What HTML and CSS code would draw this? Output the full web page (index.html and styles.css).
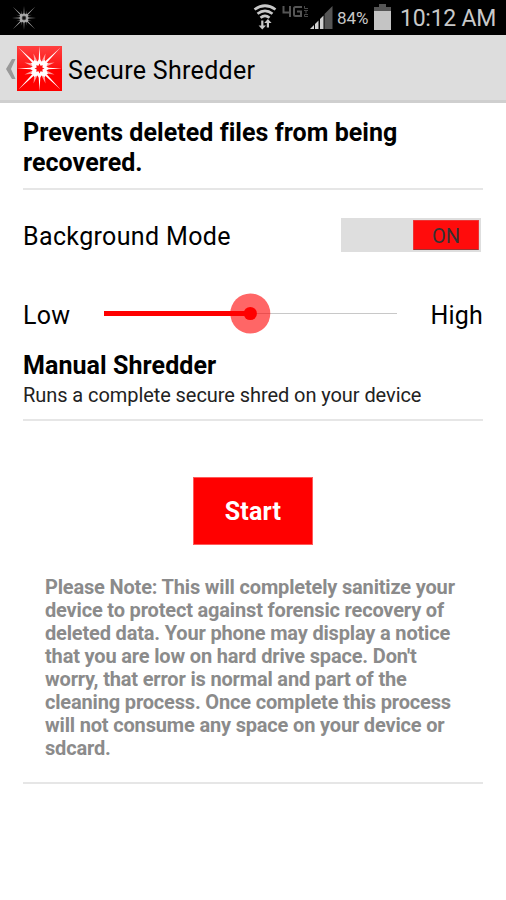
FILE: index.html
```html
<!DOCTYPE html>
<html lang="en">
<head>
<meta charset="utf-8">
<title>Secure Shredder</title>
<link rel="stylesheet" href="styles.css">
</head>
<body>
<svg class="defs" width="0" height="0" aria-hidden="true">
  <symbol id="burst" viewBox="-22.5 -22.5 45 45">
    <path d="M0-22.500 .8-9 0 0-.8-9zM0 22.500 .8 9 0 0-.8 9zM-22.500 0-9-.8 0 0-9 .8zM22.500 0 9-.8 0 0 9 .8z"/>
    <path d="M-21-21-5.500-7 0 0-7-5.500zM21-21 5.500-7 0 0 7-5.500zM-21 21-5.500 7 0 0-7 5.500zM21 21 5.500 7 0 0 7 5.500z"/>
    <path class="haze" d="M-6-15-2-7-5-5zM6-15 2-7 5-5zM-6 15-2 7-5 5zM6 15 2 7 5 5zM-15-6-7-2-5-5zM-15 6-7 2-5 5zM15-6 7-2 5-5zM15 6 7 2 5 5z"/>
    <path d="M0-10 2-7 5.500-8.500 6-6 8.500-5.500 7-2 10 0 7 2 8.500 5.500 6 6 5.500 8.500 2 7 0 10-2 7-5.500 8.500-6 6-8.500 5.500-7 2-10 0-7-2-8.500-5.500-6-6-5.500-8.500-2-7z"/>
    <path class="core" d="M0-5 1-2.800 3.300-3.300 2.800-1 5 0 2.800 1 3.300 3.300 1 2.800 0 5-1 2.800-3.300 3.300-2.800 1-5 0-2.800-1-3.300-3.300-1-2.800z"/>
  </symbol>
</svg>
<div class="status">
  <svg class="status-burst" width="24" height="24"><use href="#burst"/></svg>
  <svg class="wifi" width="24" height="27" viewBox="0 0 24 27">
    <g fill="none" stroke="#c8c8c8" stroke-width="2.700">
      <path d="M1.500 5.500Q12-2 22.500 5.500M4.500 9.800Q12 4 19.500 9.800M7.500 13.800Q12 10 16.500 13.800"/>
    </g>
    <path fill="#c8c8c8" d="M8.200 16.500h2.200v5H13L9.300 25.500 5.600 21.500h2.600zM13.800 23.500H16v-4.500h2.600L14.900 15l-3.700 4h2.600z"/>
  </svg>
  <svg class="lte" width="27" height="12" viewBox="0 0 27 12">
    <path fill="none" stroke="#555" stroke-width="2" d="M1.500 0v6.500H9M8 0v11M20 1h-6.500q-1.500 0-1.500 1.500V8.500q0 1.500 1.500 1.500H19V5.500h-4"/>
    <path fill="none" stroke="#484848" stroke-width="1" d="M22.500 0v2.500H26M22 4.500h4M24 4.500v3M26 8.500h-3.500v2H26"/>
  </svg>
  <svg class="signal" width="23" height="23" viewBox="0 0 23 23">
    <path fill="#555" d="M14.500 8 22.500 0v23h-8z"/>
    <path fill="#d0d0d0" d="M0 23l4-4v4zM5 18l3.500-3.500V23H5zM10 13l3.500-3.500V23H10z"/>
  </svg>
  <span class="percent">84%</span>
  <svg class="battery" width="17" height="26" viewBox="0 0 17 26">
    <path fill="#555" d="M5 0h7v3h5v4H0V3h5z"/><path fill="#c4c4c4" d="M0 7h17v19H0z"/>
  </svg>
  <span class="clock">10:12 AM</span>
</div>
<header class="bar">
  <svg class="back" width="10" height="20" viewBox="0 0 10 20"><path fill="#999" d="M6 0h3.500L5 10l4.500 10H6L0 10z"/></svg>
  <svg class="logo" width="45" height="45"><use href="#burst"/></svg>
  <h1>Secure Shredder</h1>
</header>
<main>
  <h2 class="lead">Prevents deleted files from being<br>recovered.</h2>
  <div class="mode">
    <span class="mode-label">Background Mode</span>
    <div class="switch"><div class="thumb">ON</div></div>
  </div>
  <div class="level">
    <span class="low">Low</span>
    <svg class="slider" width="294" height="42" viewBox="0 0 294 42">
      <path fill="#c8c8c8" d="M146 20h147v1H146z"/>
      <path fill="red" d="M0 18h146v5H0z"/>
      <circle cx="146.300" cy="20.500" r="20" fill="red" fill-opacity=".6"/>
      <circle cx="146.300" cy="20.500" r="6.600" fill="red"/>
    </svg>
    <span class="high">High</span>
  </div>
  <section class="manual">
    <h2>Manual Shredder</h2>
    <p>Runs a complete secure shred on your device</p>
  </section>
  <section class="action">
    <button class="start">Start</button>
    <p class="note">Please Note: This will completely sanitize your<br>device to protect against forensic recovery of<br>deleted data. Your phone may display a notice<br>that you are low on hard drive space. Don't<br>worry, that error is normal and part of the<br>cleaning process. Once complete this process<br>will not consume any space on your device or<br>sdcard.</p>
  </section>
</main>
</body>
</html>
```
FILE: styles.css
```css
* { box-sizing: border-box; }
body { margin: 0; width: 506px; height: 900px; background: #fff; color: #000; font-family: Roboto, sans-serif; white-space: nowrap; overflow: hidden; }
h1, h2, p { margin: 0; }
svg { display: block; flex: none; }
.defs { position: absolute; }
.status { height: 35px; background: #000; display: flex; align-items: flex-start; color: #c8c8c8; }
.status-burst { margin: 6px 0 0 12px; fill: #aaa; --core: #111; }
.status-burst { --haze: .3; }
.wifi { margin: 4px 0 0 217px; }
.lte { margin: 6px 0 0 5px; }
.signal { margin: 6px 0 0 1px; }
.percent { width: 37px; margin: 7px 0 0 4px; font-size: 17px; line-height: 22px; }
.battery { margin: 4px 0 0 0; }
.clock { margin: 5px 0 0 9px; font-size: 23px; line-height: 28px; letter-spacing: -.25px; }
.bar { height: 68px; background: #ddd; border-bottom: 3px solid #cfcfcf; display: flex; align-items: flex-start; }
.back { margin: 24px 0 0 6px; }
.logo { margin: 11px 0 0 1px; background: linear-gradient(#ff4040, #f11 50%, #f00 52%); fill: #fff; --core: #f11; --haze: .6; }
.core { fill: var(--core); }
.haze { opacity: var(--haze); }
h1 { margin: 20px 0 0 6px; font-size: 25px; line-height: 32px; font-weight: 400; letter-spacing: .31px; }
main { padding: 0 23px; }
.lead { height: 87px; padding-top: 15px; border-bottom: 2px solid #e6e6e6; font-size: 25px; line-height: 29.500px; font-weight: 700; letter-spacing: .05px; }
.mode { height: 92px; display: flex; justify-content: space-between; align-items: center; font-size: 25px; }
.mode-label { letter-spacing: .36px; }
.switch { width: 140px; height: 34px; margin: 0 2px 2px 0; background: #dedede; padding: 2px 2px 2px 72px; }
.thumb { height: 30px; background: #ff0c0c; border: 1px solid #e33; border-bottom-color: #933; border-radius: 1px; text-align: center; font-size: 20px; line-height: 30px; color: #333; }
.level { height: 65px; display: flex; align-items: center; font-size: 25px; }
.low, .high { padding-top: 1px; }
.low { width: 81px; letter-spacing: .3px; }
.slider { margin-bottom: 1px; }
.high { margin-left: auto; letter-spacing: .2px; }
.manual { height: 74px; border-bottom: 2px solid #e6e6e6; }
.manual h2 { font-size: 25px; line-height: 30px; padding-top: 4px; letter-spacing: .08px; }
.manual p { font-size: 20px; line-height: 24px; padding-top: 2px; color: #222; letter-spacing: -.07px; }
.action { height: 363px; padding: 56px 0 0 22px; border-bottom: 2px solid #e6e6e6; }
.start { display: block; width: 120px; height: 68px; margin-left: 148px; border: 1px solid #ff5a5a; padding: 2px 0 0; background: red; color: #fff; font: 700 25px/64px Roboto, sans-serif; letter-spacing: .2px; }
.note { margin-top: 31px; font-size: 20px; line-height: 23px; font-weight: 700; color: #8b8b8b; letter-spacing: -.17px; }
```
